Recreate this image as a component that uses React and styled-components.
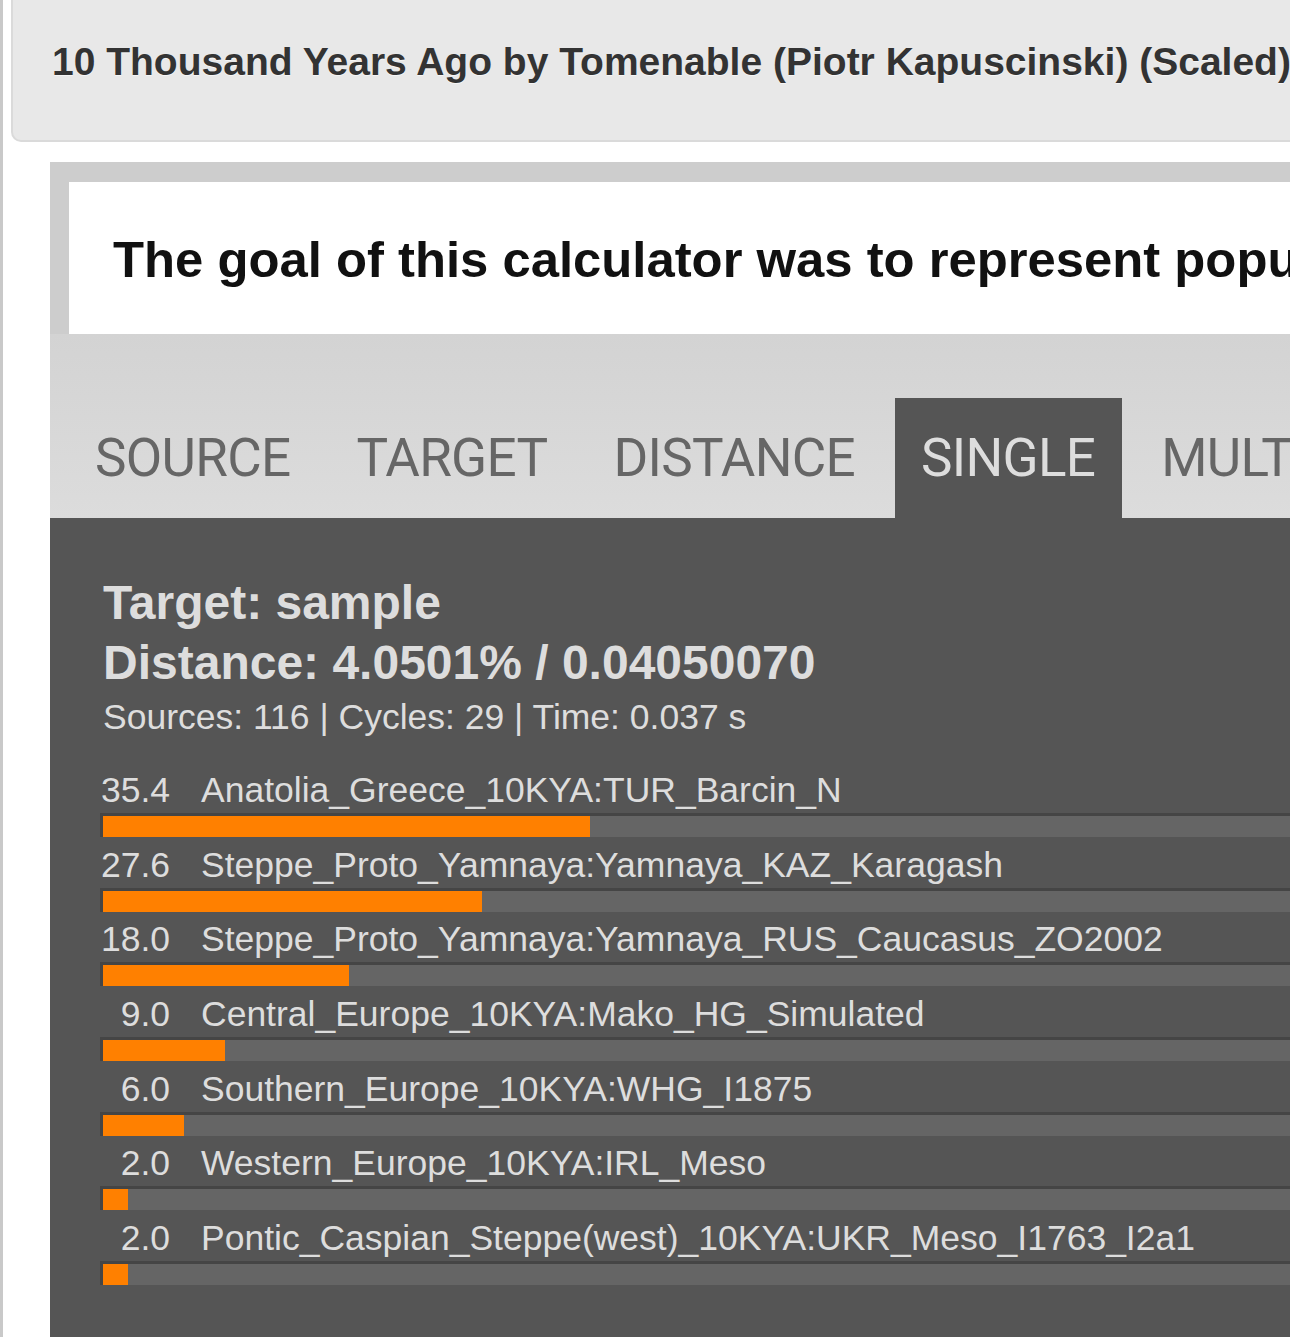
import React from "react";
import styled, { createGlobalStyle } from "styled-components";

const GlobalStyle = createGlobalStyle`
    html, body {
        margin: 0;
        padding: 0;
        overflow: hidden;
        background: #fff;
    }
`;

const results = [
    { value: 35.4, name: "Anatolia_Greece_10KYA:TUR_Barcin_N" },
    { value: 27.6, name: "Steppe_Proto_Yamnaya:Yamnaya_KAZ_Karagash" },
    { value: 18.0, name: "Steppe_Proto_Yamnaya:Yamnaya_RUS_Caucasus_ZO2002" },
    { value: 9.0, name: "Central_Europe_10KYA:Mako_HG_Simulated" },
    { value: 6.0, name: "Southern_Europe_10KYA:WHG_I1875" },
    { value: 2.0, name: "Western_Europe_10KYA:IRL_Meso" },
    { value: 2.0, name: "Pontic_Caspian_Steppe(west)_10KYA:UKR_Meso_I1763_I2a1" },
];

const tabs = ["SOURCE", "TARGET", "DISTANCE", "SINGLE", "MULTI"];

const App = () => {
    return (
        <>
            <GlobalStyle />
            <Page>
                <Header>
                    <h1>10 Thousand Years Ago by Tomenable (Piotr Kapuscinski) (Scaled)</h1>
                </Header>
                <Calculator>
                    <Intro>
                        <h2>The goal of this calculator was to represent populations from 10 thousand years ago</h2>
                    </Intro>
                    <TabBar>
                        {tabs.map((tab) => (
                            <Tab key={tab} active={tab === "SINGLE"}>{tab}</Tab>
                        ))}
                    </TabBar>
                    <Panel>
                        <Heading>Target: sample</Heading>
                        <Heading>Distance: 4.0501% / 0.04050070</Heading>
                        <Stats>Sources: 116 | Cycles: 29 | Time: 0.037 s</Stats>
                        <Results>
                            {results.map((row) => (
                                <Row key={row.name}>
                                    <Label>
                                        <Value>{row.value.toFixed(1)}</Value>
                                        <Name>{row.name}</Name>
                                    </Label>
                                    <Track>
                                        <Fill style={{ width: `calc(${row.value}% - 2.35px)` }} />
                                    </Track>
                                </Row>
                            ))}
                        </Results>
                    </Panel>
                </Calculator>
            </Page>
        </>
    );
};

const Page = styled.div`
    width: 1700px;
    min-height: 1337px;
    border-left: 3px solid #c9c9c9;
    padding-left: 8px;
    font-family: "Liberation Sans", Arial, sans-serif;
`;

const Header = styled.div`
    background: #e8e8e8;
    border-left: 2px solid #dadada;
    border-bottom: 2px solid #dadada;
    border-bottom-left-radius: 10px;
    height: 140px;
    box-sizing: content-box;
    h1 {
        margin: 0;
        padding: 37.6px 0 0 39px;
        font-size: 39px;
        line-height: 48px;
        font-weight: bold;
        color: #333;
        white-space: nowrap;
        text-shadow: 0 1px 0 rgba(255, 255, 255, 0.6);
    }
`;

const Calculator = styled.div`
    margin: 20px 0 0 39px;
    background: #cdcdcd;
    padding-top: 20px;
`;

const Intro = styled.div`
    margin: 0 19px;
    background: #fff;
    height: 152px;
    overflow: hidden;
    h2 {
        margin: 0;
        padding: 46px 0 0 44px;
        font-size: 50.8px;
        line-height: 64px;
        font-weight: bold;
        color: #111;
        white-space: nowrap;
    }
`;

const TabBar = styled.div`
    display: flex;
    gap: 13px;
    padding: 64px 0 0 19px;
    background: linear-gradient(#d3d3d3, #dcdcdc);
`;

const Tab = styled.div`
    height: 120px;
    display: flex;
    align-items: center;
    padding: 0 27px 0 26px;
    font-family: Roboto, "Liberation Sans", sans-serif;
    font-size: 53px;
    letter-spacing: -0.7px;
    color: ${(p) => (p.active ? "#dddddd" : "#666666")};
    background: ${(p) => (p.active ? "#555555" : "transparent")};
`;

const Panel = styled.div`
    background: #555555;
    padding: 54.5px 0 60px 53px;
    color: #dddddd;
`;

const Heading = styled.div`
    font-size: 48px;
    line-height: 60px;
    font-weight: bold;
`;

const Stats = styled.div`
    font-size: 35.5px;
    line-height: 48px;
`;

const Results = styled.div`
    margin: 29.5px 0 0 -3px;
`;

const Row = styled.div`
    margin-bottom: 7.67px;
`;

const Label = styled.div`
    display: flex;
    font-size: 35.5px;
    line-height: 40px;
    white-space: nowrap;
`;

const Value = styled.span`
    width: 70px;
    text-align: right;
`;

const Name = styled.span`
    margin-left: 31px;
`;

const Track = styled.div`
    margin-top: 3px;
    width: 1382px;
    height: 21px;
    background: #656565;
    border-top: 3px solid #454545;
    border-left: 3px solid #454545;
`;

const Fill = styled.div`
    height: 100%;
    background: #ff8000;
`;

export default App;
